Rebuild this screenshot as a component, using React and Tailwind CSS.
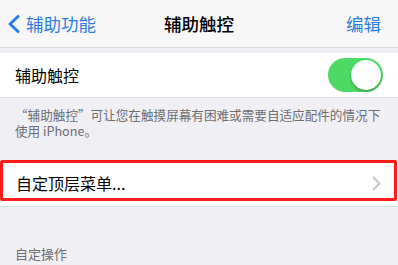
import React from "react";

const font = { fontFamily: '"Noto Sans CJK SC", "Noto Sans", sans-serif' };

export default function App() {
  return (
    <div className="w-[398px] h-[265px] overflow-hidden bg-[#efeff4] flex flex-col" style={font}>
      {/* Nav bar */}
      <div className="h-[48px] bg-[#f7f7f8] border-b border-[#d8d8dc] flex items-center relative shrink-0">
        <div className="flex items-center pl-[7px] text-[#2a7de1]">
          <svg width="14" height="18" viewBox="0 0 14 18" className="mr-[5px]">
            <path d="M11 1.5 L3 9 L11 16.5" fill="none" stroke="#2a7de1" strokeWidth="3" strokeLinecap="round" strokeLinejoin="round" />
          </svg>
          <span className="text-[17.5px] leading-none">辅助功能</span>
        </div>
        <div className="absolute left-0 right-0 text-center text-[17.5px] font-medium text-black leading-none pointer-events-none">
          辅助触控
        </div>
        <div className="ml-auto pr-[17px] text-[17.5px] text-[#2a7de1] leading-none">编辑</div>
      </div>

      <div className="h-[5px] shrink-0" />

      {/* Toggle row */}
      <div className="h-[45px] bg-white border-b border-[#dcdce0] flex items-center pl-[15px] pr-[15px] shrink-0">
        <span className="text-[16px] text-black">辅助触控</span>
        <div className="ml-auto w-[55px] h-[34px] rounded-full bg-[#4cd964] relative">
          <div className="absolute right-[2px] top-[2px] w-[30px] h-[30px] rounded-full bg-white shadow-[0_2px_3px_rgba(0,0,0,0.25)]" />
        </div>
      </div>

      {/* Footer text */}
      <div className="pl-[15px] pr-[12px] pt-[9px] text-[12.6px] leading-[16px] text-[#6d6d72] h-[62px] shrink-0">
        “辅助触控”可让您在触摸屏幕有困难或需要自适应配件的情况下使用 iPhone。
      </div>

      {/* Custom top menu row */}
      <div className="h-[47px] bg-white border-b border-[#dcdce0] relative flex items-center pl-[16px] pr-[15px] shrink-0">
        <span className="text-[16px] text-black">自定顶层菜单...</span>
        <svg width="9" height="15" viewBox="0 0 9 15" className="ml-auto mr-[2px]">
          <path d="M1.5 1.5 L7.5 7.5 L1.5 13.5" fill="none" stroke="#c7c7cc" strokeWidth="2" strokeLinecap="round" strokeLinejoin="round" />
        </svg>
        <div className="absolute left-0 top-0 right-[1px] bottom-[5px] border-[3px] border-[#ff1b1b] rounded-[2px]" />
      </div>

      <div className="pl-[15px] pt-[39px] text-[13px] leading-[16px] text-[#6d6d72]">自定操作</div>
    </div>
  );
}
